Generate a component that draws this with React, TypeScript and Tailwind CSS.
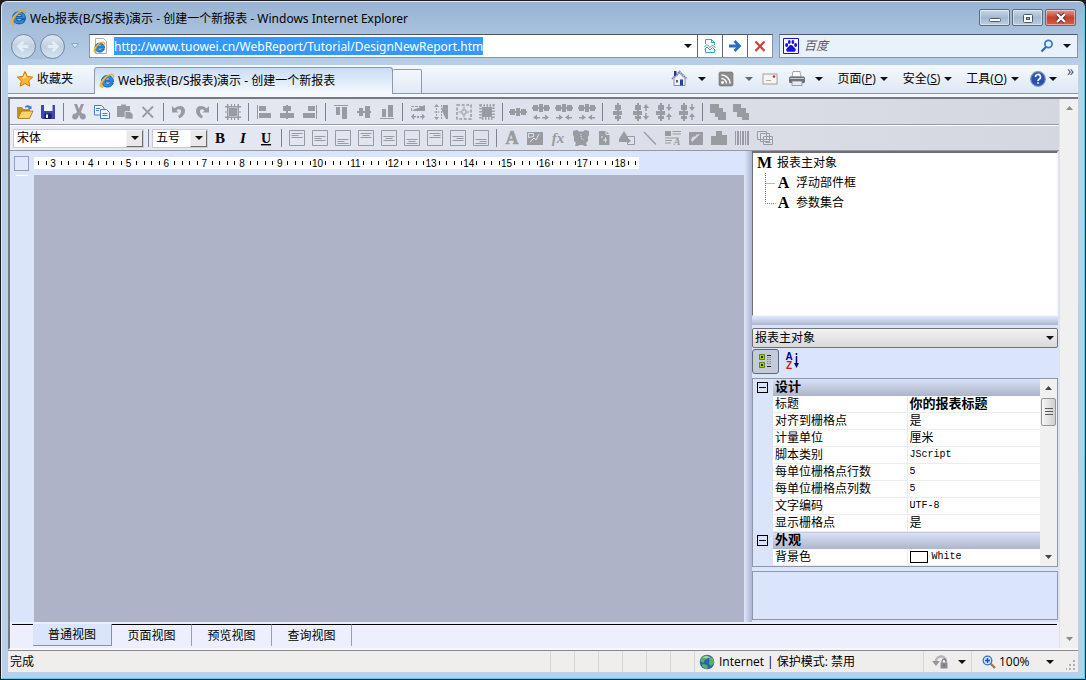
import { useState } from "react";

type Align = "start" | "center" | "end";

interface Tool {
  label: string;
  glyph: React.ReactNode;
}

const SEGOE = "font-['Open_Sans','Noto_Sans_CJK_SC',sans-serif]";
const SEGOE_WIDE = "font-['Noto_Sans','Noto_Sans_CJK_SC',sans-serif]";
const SONG = "font-['Liberation_Sans','Noto_Sans_CJK_SC',sans-serif]";
const SERIF_BOLD = "font-['Liberation_Serif',serif] font-bold";

export default function App() {
  return (
    <div className={`flex min-h-screen bg-[#1b1d20] p-px text-xs text-black ${SEGOE}`}>
      <div className="flex min-w-0 flex-1 flex-col rounded-t-md border border-[#dfeaf5] border-r-[#45d6ec] border-b-[#45d6ec] bg-linear-to-b from-[#98b4d3] via-[#bad1ea] via-10% to-[#b7d1ea] px-1.5 pb-1.5">
        <TitleBar />
        <NavigationBar />
        <CommandBar />
        <div className="h-[3px] bg-[#f4f7fb]" />
        <ReportDesigner />
        <StatusBar />
      </div>
    </div>
  );
}

const WINDOW_BUTTON =
  "grid h-[17px] w-[31px] place-items-center rounded-[2px] border border-[#5b6b80] shadow-[inset_0_0_0_1px_rgba(255,255,255,0.45)]";

function TitleBar() {
  return (
    <header className="flex h-[31px] items-center">
      <IeLogo className="ml-0.5 size-[17px]" />
      <h1 className={`ml-[3px] flex-1 pt-0.5 text-xs whitespace-nowrap ${SEGOE_WIDE}`}>
        Web报表(B/S报表)演示 - 创建一个新报表 - Windows Internet Explorer
      </h1>
      <div className="mr-0.5 flex gap-0.5">
        <button type="button" aria-label="最小化" className={`${WINDOW_BUTTON} bg-linear-to-b from-[#c9d8e9] via-[#a4b9d1] via-50% to-[#b9cde3]`}>
          <svg viewBox="0 0 30 16" className="h-4 w-[30px]">
            <rect x="9.5" y="8.5" width="11" height="3" rx="1" fill="#fff" stroke="#4d5663" />
          </svg>
        </button>
        <button type="button" aria-label="最大化" className={`${WINDOW_BUTTON} bg-linear-to-b from-[#c9d8e9] via-[#a4b9d1] via-50% to-[#b9cde3]`}>
          <svg viewBox="0 0 30 16" className="h-4 w-[30px]">
            <rect x="10.5" y="4.5" width="9" height="8" rx="1" fill="#fff" stroke="#4d5663" />
            <rect x="13.5" y="7.5" width="3" height="2" fill="#9db3cd" stroke="#4d5663" />
          </svg>
        </button>
        <button type="button" aria-label="关闭" className={`${WINDOW_BUTTON} bg-linear-to-b from-[#e09a8c] via-[#c2402c] via-50% to-[#d0604a]`}>
          <svg viewBox="0 0 30 16" className="h-4 w-[30px]">
            <path d="m11 4 8 8m0-8-8 8" stroke="#53302f" strokeWidth="4" />
            <path d="m11 4 8 8m0-8-8 8" stroke="#fff" strokeWidth="2.4" />
          </svg>
        </button>
      </div>
    </header>
  );
}

const ADDRESS_BUTTON = "grid h-full w-[25px] place-items-center border-l border-[#5c6a7a]";

function NavigationBar() {
  return (
    <div className="mb-1.5 flex h-[26px] items-center pl-[3px]">
      <div className="flex gap-1 rounded-full bg-[#a9c1db]">
        <RoundNavButton label="后退" path="M12 7 7 12l5 5M7 12h10" />
        <RoundNavButton label="前进" path="m12 7 5 5-5 5M17 12H7" />
      </div>
      <button type="button" aria-label="最近的页面" className="ml-1.5">
        <svg viewBox="0 0 8 6" className="h-1.5 w-2">
          <path d="M.5.5h7L4 5z" fill="#dbe7f3" stroke="#8fa5bd" />
        </svg>
      </button>

      <form className="ml-[10px] flex h-6 min-w-0 flex-1 items-center border border-[#8596aa] border-t-[#4e5864] bg-white">
        <svg viewBox="0 0 16 18" className="ml-[3px] h-[18px] w-4 shrink-0">
          <path d="M2.5 1.5h8l3 3v12h-11z" fill="#fff" stroke="#a9aeb5" />
          <g transform="translate(0 4) scale(.4)">
            <IeLogoShape />
          </g>
        </svg>
        <input
          type="text"
          aria-label="地址"
          defaultValue="http://www.tuowei.cn/WebReport/Tutorial/DesignNewReport.htm"
          className={`ml-[5px] h-[18px] field-sizing-content bg-[#3399ff] text-xs text-white outline-none ${SEGOE_WIDE}`}
        />
        <span className="flex-1" />
        <button type="button" aria-label="显示地址列表" className="grid h-full w-[18px] place-items-center">
          <Caret />
        </button>
        <button type="button" aria-label="兼容性视图" className={ADDRESS_BUTTON}>
          <svg viewBox="0 0 16 16" className="size-4 fill-none">
            <path d="M3.5 6V1.500h6l3 3V7M9.500 1.500v3h3M3.500 11v3.500h9V12" stroke="#35a7b8" />
            <path d="m2.500 9 2.500-2.500 3 3 2.500-2.500 3 3M2.500 11.500 5 9l3 3 2.500-2.500 3 3" stroke="#3f8fc4" />
          </svg>
        </button>
        <button type="button" aria-label="转到" className={ADDRESS_BUTTON}>
          <svg viewBox="0 0 16 16" className="size-4 fill-none">
            <path d="M2 8h9M7.500 3 12.500 8l-5 5" stroke="#2a6fbe" strokeWidth="2.800" />
          </svg>
        </button>
        <button type="button" aria-label="停止" className={ADDRESS_BUTTON}>
          <svg viewBox="0 0 16 16" className="size-4">
            <path d="M3.500 3.500 12.500 13M12.500 3.500l-9 9.500" stroke="#cf4140" strokeWidth="2.200" />
          </svg>
        </button>
      </form>

      <form role="search" className="ml-1.5 flex h-6 w-[299px] items-center border border-[#8596aa] border-t-[#4e5864] bg-[#e9f1fa]">
        <svg viewBox="0 0 16 16" className="ml-[3px] size-4">
          <path d="M.5.5h15v15H.5z" fill="#fff" stroke="#1414e0" />
          <g fill="#1414e0">
            <ellipse cx="3.600" cy="7" rx="1.500" ry="2" />
            <ellipse cx="6.300" cy="4" rx="1.400" ry="2" />
            <ellipse cx="9.900" cy="4" rx="1.400" ry="2" />
            <ellipse cx="12.600" cy="7" rx="1.500" ry="2" />
            <path d="M8 7c2 0 2.500 2 4 3.200 1.500 1.500.6 3.800-1.500 3.600-1.500-.2-3.500-.2-5 0-2.200.2-3-2.100-1.500-3.600C5.500 9 6 7 8 7z" />
          </g>
        </svg>
        <input
          type="search"
          aria-label="搜索"
          placeholder="百度"
          className="ml-[5px] min-w-0 flex-1 bg-transparent text-xs italic outline-none placeholder:text-[#5b5b5b]"
        />
        <button type="submit" aria-label="开始搜索" className="grid w-6 place-items-center">
          <svg viewBox="0 0 14 14" className="size-3.5 fill-none">
            <circle cx="8.500" cy="5" r="3.600" stroke="#3a7cc4" strokeWidth="1.800" />
            <path d="M6 8 1.500 12.500" stroke="#2b66a9" strokeWidth="2.200" />
          </svg>
        </button>
        <button type="button" aria-label="搜索选项" className="mr-0.5 grid w-4 place-items-center">
          <Caret />
        </button>
      </form>
    </div>
  );
}

function RoundNavButton({ label, path }: { label: string; path: string }) {
  return (
    <button
      type="button"
      aria-label={label}
      className="size-[25px] rounded-full border border-[#7288a1] bg-linear-to-b from-[#dfe8f1] via-[#c0d0e0] via-50% to-[#d5e4f1]"
    >
      <svg viewBox="0 0 24 24" className="size-[23px] fill-none">
        <path d={path} stroke="#e4edf5" strokeWidth="3" />
      </svg>
    </button>
  );
}

function CommandBar() {
  return (
    <div className="flex h-[29px] border-b border-[#8a94a1] bg-linear-to-b from-[#f5f9fd] to-[#dde8f5]">
      <button type="button" className="flex w-[86px] items-center gap-[3px] pl-2">
        <svg viewBox="0 0 18 18" className="size-[18px]">
          <path
            d="m9 1.500 2.300 5 5.400.6-4 3.700 1.100 5.400L9 13.500l-4.800 2.700 1.100-5.400-4-3.700 5.400-.6z"
            fill="#ffb52e"
            stroke="#c9780f"
          />
          <path d="m9 4 1.400 3.500L6 9z" fill="#ffe9a8" />
        </svg>
        收藏夹
      </button>
      <div role="tablist" className="-mb-px flex flex-1 items-end">
        <button
          type="button"
          role="tab"
          aria-selected="true"
          className={`flex h-[27px] w-[299px] items-center gap-[3px] rounded-t-[3px] border border-b-0 border-[#8d9aab] bg-linear-to-b from-[#c9dcf6] to-[#f6fafe] pl-1 ${SEGOE_WIDE}`}
        >
          <IeLogo className="size-4" />
          Web报表(B/S报表)演示 - 创建一个新报表
        </button>
        <button
          type="button"
          aria-label="新选项卡"
          className="h-[25px] w-[29px] rounded-t-[2px] border border-l-0 border-[#8d9aab] bg-linear-to-b from-[#f3f7fc] to-[#e0eaf6]"
        />
      </div>
      <div className="flex items-center">
        <CommandIcon label="主页" className="w-5">
          <path d="M3 8.500v7h11v-7L8.500 3z" fill="#f1f1f4" stroke="#73767f" strokeWidth=".8" />
          <path d="M1 9 8.500 1.500 16 9" fill="none" stroke="#6d7ec0" strokeWidth="1.600" strokeDasharray="1.500 .6" />
          <path d="M3 1h2.500v4L3 6.500z" fill="#2338a8" />
          <path d="M9 9.500h3v6H9z" fill="#24429d" />
          <path d="M5 10h2v2.500H5z" fill="#5b6275" />
        </CommandIcon>
        <MenuCaret className="w-6" />
        <CommandIcon label="源" className="w-6">
          <rect x="2" y="2" width="14" height="14" rx="1.500" fill="#8c8c8c" stroke="#6f6f6f" strokeWidth=".6" />
          <circle cx="5.500" cy="12.500" r="1.400" fill="#fff" />
          <path d="M4.500 8.500a5 5 0 0 1 5 5M4.500 5a8.500 8.500 0 0 1 8.500 8.500" fill="none" stroke="#fff" strokeWidth="1.500" />
        </CommandIcon>
        <MenuCaret className="w-[22px] opacity-60" />
        <CommandIcon label="阅读邮件" className="w-5">
          <rect x="2" y="4" width="14" height="10" fill="#f7f5f4" stroke="#8d8b8b" strokeWidth=".8" />
          <path d="M5 10.500h5" stroke="#b9a9a9" />
          <circle cx="13" cy="6.500" r="1.300" fill="#c9302c" />
        </CommandIcon>
        <CommandIcon label="打印" className="ml-1.5 w-[22px]">
          <path d="M5 1.500h7l1 5.500H4z" fill="#fdfdfd" stroke="#7c8088" strokeWidth=".7" />
          <rect x="1" y="6.500" width="16" height="6.500" rx="1.500" fill="#6e737b" />
          <path d="M2 8.500h14" stroke="#c6cad0" />
          <path d="M4 11h10v4.500H4z" fill="#e8ebef" stroke="#777c85" strokeWidth=".7" />
        </CommandIcon>
        <MenuCaret className="w-[22px]" />
        <CommandMenu text="页面" accessKey="P" />
        <CommandMenu text="安全" accessKey="S" />
        <CommandMenu text="工具" accessKey="O" />
        <CommandIcon label="帮助" className="ml-0.5 w-[22px]">
          <circle cx="9" cy="9" r="7.300" fill="#2a50b5" stroke="#7c8fb8" strokeWidth="1.200" />
          <path d="M6.500 7a2.500 2.500 0 1 1 3.600 2.200c-.8.5-1.100.8-1.100 1.800M9 12.200v1.600" fill="none" stroke="#fff" strokeWidth="1.700" />
        </CommandIcon>
        <MenuCaret className="w-2" />
        <button type="button" aria-label="更多" className="mr-1 -mt-4 ml-1.5 pl-1 text-sm leading-3 text-[#3a4f7d]">
          »
        </button>
      </div>
    </div>
  );
}

interface CommandIconProps {
  label: string;
  className: string;
  children: React.ReactNode;
}

function CommandIcon({ label, className, children }: CommandIconProps) {
  return (
    <button type="button" aria-label={label} className={`grid place-items-center ${className}`}>
      <svg viewBox="0 0 18 18" className="size-[18px]">
        {children}
      </svg>
    </button>
  );
}

function MenuCaret({ className }: { className: string }) {
  return (
    <span className={`grid place-items-center ${className}`}>
      <Caret />
    </span>
  );
}

function CommandMenu({ text, accessKey }: { text: string; accessKey: string }) {
  return (
    <button type="button" className="flex w-[65px] items-center justify-center gap-1 whitespace-nowrap">
      <span>
        {text}(<u>{accessKey}</u>)
      </span>
      <Caret />
    </button>
  );
}

function Caret() {
  return (
    <svg viewBox="0 0 8 4" className="h-1 w-2" aria-hidden="true">
      <path d="M0 0h8L4 4z" fill="#111" />
    </svg>
  );
}

function ReportDesigner() {
  return (
    <div className={`flex flex-1 border-t-2 border-b-2 border-l-2 border-[#777a80] border-b-[#f6f7fa] bg-[#dae4fa] ${SONG}`}>
      <main className="flex min-w-0 flex-1 flex-col">
        <StandardToolbar />
        <FormatToolbar />
        <div className="flex flex-1">
          <DesignSurface />
          <div className="w-2 bg-linear-to-r from-[#dfe8fb] to-[#a9b4cf]" />
          <aside className="flex w-[307px] shrink-0 flex-col pr-px pb-0.5">
            <ObjectTree />
            <div className="mt-px h-2 bg-linear-to-b from-[#dde6fa] to-[#aab5d0]" />
            <PropertyPanel />
          </aside>
        </div>
        <ViewTabs />
      </main>
      <div className="flex w-[19px] flex-col items-center justify-between border-l border-[#e2e2e2] bg-[#f1f0f0] py-[7px]">
        <ScrollArrow up muted />
        <ScrollArrow muted />
      </div>
    </div>
  );
}

function ScrollArrow({ up = false, muted = false }: { up?: boolean; muted?: boolean }) {
  return (
    <svg viewBox="0 0 7 4" className="h-1 w-[7px]" aria-hidden="true">
      <path d={up ? "M0 4h7L3.500 0z" : "M0 0h7L3.500 4z"} fill={muted ? "#8b8b8b" : "#444"} />
    </svg>
  );
}

const TOOLBAR = "flex h-[26px] items-center border-b border-[#959aa6] bg-linear-to-r from-[#e8ecf7] to-[#d4d7e0] pl-[3px]";

function StandardToolbar() {
  return (
    <div role="toolbar" aria-label="标准" className={TOOLBAR}>
      <ToolGroups groups={STANDARD_GROUPS} />
    </div>
  );
}

function FormatToolbar() {
  return (
    <div role="toolbar" aria-label="格式" className={`${TOOLBAR} border-t border-t-white`}>
      <ComboBox label="字体" options={["宋体", "黑体"]} className="w-[131px]" />
      <Separator />
      <ComboBox label="字号" options={["五号", "四号"]} className="w-14" />
      <ToolGroups groups={FORMAT_GROUPS} />
    </div>
  );
}

function ComboBox({ label, options, className }: { label: string; options: string[]; className: string }) {
  return (
    <div className={`relative h-[19px] bg-white ${className}`}>
      <select aria-label={label} className="h-full w-full appearance-none border border-[#c9ccd4] px-[3px] text-xs leading-4 outline-none">
        {options.map((option) => (
          <option key={option}>{option}</option>
        ))}
      </select>
      <span className="pointer-events-none absolute top-px right-px grid h-[17px] w-[17px] place-items-center border border-[#f4f4f4] border-r-[#6f6f6f] border-b-[#6f6f6f] bg-[#e9e9e9]">
        <Caret />
      </span>
    </div>
  );
}

function Separator() {
  return (
    <span className="flex w-2 justify-center">
      <span className="h-[18px] w-px bg-[#7d828e]" />
    </span>
  );
}

function ToolGroups({ groups }: { groups: Tool[][] }) {
  return groups.map((tools, index) => (
    <div key={tools[0].label} className="flex items-center">
      {index > 0 ? <Separator /> : null}
      {tools.map((tool) => (
        <button key={tool.label} type="button" aria-label={tool.label} className="grid h-[22px] w-[23px] place-items-center">
          <svg viewBox="0 0 20 20" className="size-5" fill="#999ba0">
            {tool.glyph}
          </svg>
        </button>
      ))}
    </div>
  ));
}

const arrowsBelow: Record<string, React.ReactNode> = {
  out: <path d="M2 15.500l4-3V15h3v1.500H6V18zM18 15.500l-4-3V15h-3v1.500h3V18z" />,
  in: <path d="M9 15.500l-4-3V15H2v1.500h3V18zM11 15.500l4-3V15h3v1.500h-3V18z" />,
};

const arrowsBeside: Record<string, React.ReactNode> = {
  out: <path d="M15 2l-3 4h2.200v3h1.500V6H18zM15 18l-3-4h2.200v-3h1.500v3H18z" />,
  in: <path d="M15 9l-3-4h2.200V2h1.500v3H18zM15 11l-3 4h2.200v3h1.500v-3H18z" />,
};

function horizontalSpacing(arrows?: "out" | "in") {
  return (
    <g transform={arrows ? undefined : "translate(0 4)"}>
      <path d="M2 3h5v6H2zM8 2h4v8H8zM13 3h5v6h-5zM1 5h18v2H1z" />
      {arrows ? arrowsBelow[arrows] : null}
    </g>
  );
}

function verticalSpacing(arrows?: "out" | "in") {
  return (
    <g transform={arrows ? undefined : "translate(3 0)"}>
      <path d="M4 3h6v5H4zM2 9h9v4H2zM4 14h6v3H4zM6 1h2v18H6z" />
      {arrows ? arrowsBeside[arrows] : null}
    </g>
  );
}

const STANDARD_GROUPS: Tool[][] = [
  [
    {
      label: "打开",
      glyph: (
        <>
          <path d="M2 5h5l1.500 2H15v3H6l-3 6H2z" fill="#c98e1b" />
          <path d="M3 16.500 6.500 9H18l-3.500 7.500z" fill="#ffd36b" stroke="#9a6b14" strokeWidth=".8" />
          <path d="M10 4.500c2-2 4-1.500 5.500 0l1-1V7h-3.500l1-1c-1-1-2.500-1.200-4-.2z" fill="#4a73c9" />
        </>
      ),
    },
    {
      label: "保存",
      glyph: (
        <>
          <path d="M3 3h14v14H4.500L3 15.500z" fill="#3f46b8" />
          <path d="M6 3h8.500v6H6z" fill="#eef1fb" />
          <path d="M6.500 11.500h7V17h-7z" fill="#1c2059" />
          <path d="M8 12.500h2V16H8z" fill="#fff" />
        </>
      ),
    },
  ],
  [
    {
      label: "剪切",
      glyph: <path d="M5 2h3l2 5 2-5h3l-3 8 1.500 1.500a3 3 0 1 1-2.500 4L10 12.500 9 15.500a3 3 0 1 1-2.500-4L8 10z" />,
    },
    {
      label: "复制",
      glyph: (
        <g fill="#e9f3ff" stroke="#4a7cc4">
          <path d="M2.500 3.500h7l2.500 2.500v7H2.500z" />
          <path d="M8.500 7.500h6l3 3v6h-9z" />
          <path d="M4 6.500h4M4 8.500h3M10.500 11.500h5M10.500 13.500h5" />
        </g>
      ),
    },
    {
      label: "粘贴",
      glyph: (
        <>
          <path d="M2 4h4V2.500h5V4h4v5h-4v6H2z" />
          <path d="M10 9.500h5l3 2.500v5h-8z" stroke="#e0e3ec" strokeWidth=".8" />
        </>
      ),
    },
    { label: "删除", glyph: <path d="m4.500 5 10.500 10.500M15 4.500 4.500 15" stroke="#999ba0" strokeWidth="1.800" /> },
  ],
  [
    { label: "撤消", glyph: <path d="M3 4v6.500h6.500L7.500 8.500c2-2 4.500-1.500 4.500 1 0 2-1 3-3 4.500l1.500 2.500c3.500-2 5.500-4.200 5.500-7.500 0-5.500-6-6.500-10.500-2.500z" /> },
    { label: "恢复", glyph: <path d="M17 4v6.500h-6.500l2-2c-2-2-4.500-1.500-4.500 1 0 2 1 3 3 4.500L9.500 16.500C6 14.500 4 12.300 4 9c0-5.500 6-6.500 10.500-2.500z" /> },
  ],
  [
    {
      label: "对齐到栅格",
      glyph: (
        <path d="M6 6h8v8H6zM2 4h16v1.500H2zM2 14.500h16V16H2zM4 2h1.500v16H4zM14.500 2H16v16h-1.500zM8 2h1v3H8zM11 2h1v3h-1zM8 15h1v3H8zM11 15h1v3h-1zM2 9.500h3v1H2zM15 9.500h3v1h-3z" />
      ),
    },
  ],
  [
    { label: "左对齐", glyph: <path d="M3 3h1v14H3zM5 4h7v5H5zM5 11h12v5H5z" /> },
    { label: "居中对齐", glyph: <path d="M9 3h2v14H9zM6 4h8v5H6zM3 11h14v5H3z" /> },
    { label: "右对齐", glyph: <path d="M16 3h1v14h-1zM8 4h7v5H8zM3 11h12v5H3z" /> },
  ],
  [
    { label: "顶端对齐", glyph: <path d="M3 3h14v1H3zM5 5h4v8H5zM11 5h5v12h-5z" /> },
    { label: "中间对齐", glyph: <path d="M3 9h14v2H3zM5 6h4v8H5zM11 4h5v12h-5z" /> },
    { label: "底端对齐", glyph: <path d="M3 16h14v1H3zM5 7h4v8H5zM11 3h5v12h-5z" /> },
  ],
  [
    {
      label: "宽度相同",
      glyph: (
        <>
          <path d="M3.500 9V4.500h13" fill="none" stroke="#999ba0" strokeDasharray="3 1" />
          <path d="M10 6l7-3v6H4l3-2zM3 14.500l3-3V14h2v1.500H6V18zM17 14.500l-3-3V14h-2v1.500h2V18z" />
          <path d="M9 14h2v2H9z" />
        </>
      ),
    },
    {
      label: "高度相同",
      glyph: (
        <>
          <path d="M12 3h5v14h-2l-4-8z" />
          <path d="M10.500 3v14M3.500 10h5M5.500 3v14" fill="none" stroke="#999ba0" strokeDasharray="2 1" />
          <path d="M5.500 2l2.500 3H3zM5.500 18l2.500-3H3z" />
        </>
      ),
    },
    {
      label: "大小相同",
      glyph: (
        <>
          <path d="M3 3h14v14H3z" fill="none" stroke="#999ba0" strokeWidth="1.500" strokeDasharray="3 1.600" />
          <path d="M8 8h4v4H8z" fill="none" stroke="#999ba0" />
          <path d="M9.500 4.500h1v3h-1zM9.500 12.500h1v3h-1zM4.500 9.500h3v1h-3zM12.500 9.500h3v1h-3z" />
        </>
      ),
    },
    {
      label: "大小适应栅格",
      glyph: (
        <>
          <path d="M5 5h10v10H5z" />
          <path d="M3.500 3.500h13v13h-13z" fill="none" stroke="#999ba0" strokeWidth="2.500" strokeDasharray="1.500 1.500" />
        </>
      ),
    },
  ],
  [
    { label: "水平间距相等", glyph: horizontalSpacing() },
    { label: "增加水平间距", glyph: horizontalSpacing("out") },
    { label: "减少水平间距", glyph: horizontalSpacing("in") },
    { label: "删除水平间距", glyph: horizontalSpacing("in") },
  ],
  [
    { label: "垂直间距相等", glyph: verticalSpacing() },
    { label: "增加垂直间距", glyph: verticalSpacing("out") },
    { label: "减少垂直间距", glyph: verticalSpacing("in") },
    { label: "删除垂直间距", glyph: verticalSpacing("in") },
  ],
  [
    { label: "置于顶层", glyph: <path d="M2 2h9v4h4v4h3v8h-8v-3H7v-4H2z" /> },
    { label: "置于底层", glyph: <path d="M2 2h8v4h5v5h3v7h-7v-3H6v-5H2z" /> },
  ],
];

const LINE_TOP: Record<Align, number> = { start: 5, center: 8, end: 11 };

function alignTool(label: string, horizontal: Align, vertical: Align): Tool {
  const top = LINE_TOP[vertical];
  const inset = horizontal === "start" ? 4 : horizontal === "center" ? 6 : 8;

  return {
    label,
    glyph: (
      <path
        d={`M2.500 2.500h15v15h-15zM4.500 ${top}.500h11M${inset}.500 ${top + 2}.500h7M4.500 ${top + 4}.500h11`}
        fill="none"
        stroke="#999ba0"
      />
    ),
  };
}

const FORMAT_GROUPS: Tool[][] = [
  [
    { label: "加粗", glyph: <text x="10" y="15" textAnchor="middle" fontSize="15" fill="#000" className={SERIF_BOLD}>B</text> },
    { label: "斜体", glyph: <text x="10" y="15" textAnchor="middle" fontSize="15" fill="#000" className={`${SERIF_BOLD} italic`}>I</text> },
    { label: "下划线", glyph: <text x="10" y="15" textAnchor="middle" fontSize="14" fill="#000" className={`${SERIF_BOLD} underline`}>U</text> },
  ],
  [
    alignTool("左上对齐", "start", "start"),
    alignTool("左中对齐", "start", "center"),
    alignTool("左下对齐", "start", "end"),
    alignTool("中上对齐", "center", "start"),
    alignTool("正中对齐", "center", "center"),
    alignTool("中下对齐", "center", "end"),
    alignTool("右上对齐", "end", "start"),
    alignTool("右中对齐", "end", "center"),
    alignTool("右下对齐", "end", "end"),
  ],
  [
    { label: "文本", glyph: <text x="10" y="16" textAnchor="middle" fontSize="18" stroke="#999ba0" strokeWidth=".6" className={SERIF_BOLD}>A</text> },
    {
      label: "图片",
      glyph: (
        <>
          <path d="M2 4h16v13H2z" />
          <path d="M3.500 5.500h5v3l-5 1zM5 14l4-4 2 2 3-6" fill="none" stroke="#e0e3ec" />
        </>
      ),
    },
    { label: "公式", glyph: <text x="10" y="15" textAnchor="middle" fontSize="15" className={`${SERIF_BOLD} italic`}>fx</text> },
    {
      label: "时间",
      glyph: (
        <>
          <path d="M2 3l4-1 2 1.500h4L14 2l4 1v4l-1 2v4l-2 2 1 3h-3l-1-1H8l-1 1H4l1-3-2-2V9L2 7z" />
          <path d="M10 6v4l3 2" fill="none" stroke="#e0e3ec" strokeDasharray="1 1" />
        </>
      ),
    },
    {
      label: "页码",
      glyph: (
        <>
          <path d="M5 3h7l3.500 3.500V17H5z" />
          <path d="M12 3v3.500h3.500M7 9h2M11.500 9.500v5M9 12h4" fill="none" stroke="#e0e3ec" />
        </>
      ),
    },
    {
      label: "形状",
      glyph: (
        <>
          <path d="M7 3l5 8v3H2v-3z" />
          <path d="M10.500 8.500h7v8h-7z" fill="#dfe2eb" stroke="#999ba0" />
          <path d="M10 9l4 4-4 3z" />
        </>
      ),
    },
    { label: "直线", glyph: <path d="m4 4 12 12.500" stroke="#999ba0" strokeWidth="1.300" /> },
    {
      label: "富文本",
      glyph: (
        <>
          <path d="M2 3h6v5H2zM9.500 3H18v1H9.500zM9.500 5.500H18v1H9.500zM2 9.500h14v1H2zM2 12h7v1H2zM2 14.500h6v1H2z" />
          <text x="14" y="17" textAnchor="middle" fontSize="10" className={`${SERIF_BOLD} italic`}>A</text>
        </>
      ),
    },
    {
      label: "图像",
      glyph: (
        <>
          <path d="M3 4h14v13H3z" />
          <path d="M5 12c1-5 4-2 5.500-5.500L15 6l-8 9z" fill="#d5d8e1" />
          <path d="M7 15l8-8" stroke="#999ba0" strokeWidth="2.500" />
        </>
      ),
    },
    { label: "图表", glyph: <path d="M2 8h5V3h6v4h5v10H2z" /> },
    { label: "条形码", glyph: <path d="M3 3h1v14H3zM5 3h2v14H5zM8 3h1v14H8zM10 3h2v14h-2zM13 3h1v14h-1zM15 3h2v14h-2z" /> },
    {
      label: "子报表",
      glyph: (
        <g fill="#dfe2eb" stroke="#999ba0">
          <path d="M2.500 3.500h9v8h-9zM5.500 5.500h9v8h-9zM8.500 8.500h9v8h-9z" />
          <path d="M8.500 11.500h9M10.500 14.500h5" />
        </g>
      ),
    },
  ],
];

function DesignSurface() {
  return (
    <section className="flex min-w-0 flex-1 flex-col">
      <div className="flex h-6 items-center">
        <span className="ml-1 size-[15px] border border-[#93a0bd] bg-[#dfe8fb]" />
        <div className="ml-[5px] bg-white">
          <Ruler />
        </div>
      </div>
      <div className="flex flex-1">
        <div className="w-6 px-1.5">
          <div className="h-px bg-white" />
        </div>
        <div className="flex-1 bg-[#aeb3c7]" />
      </div>
    </section>
  );
}

// One centimetre on the ruler, divided into five ticks.
const CENTIMETRE = 37.8;

function Ruler() {
  const marks = Array.from({ length: 16 }, (_, index) => index + 3);

  return (
    <svg width="605" height="12" viewBox="0 0 605 12" className="block" aria-label="标尺">
      <path d="M4.500 4v4M12.500 4v4" stroke="#000" />
      {marks.map((mark, index) => {
        const x = 19 + index * CENTIMETRE;
        return (
          <g key={mark}>
            <text x={x} y="10" textAnchor="middle" fontSize="10">
              {mark}
            </text>
            {[1, 2, 3, 4].map((tick) => {
              const tickX = Math.round(x + (tick * CENTIMETRE) / 5);
              return tickX < 603 ? <path key={tick} d={`M${tickX}.5 4v4`} stroke="#000" /> : null;
            })}
          </g>
        );
      })}
    </svg>
  );
}

function ObjectTree() {
  return (
    <div className="flex-1 border border-t-2 border-[#f4f6fb] border-t-[#6e7075] border-l-[#6e7075] bg-white">
      <div className="pl-1">
        <TreeLabel letter="M" text="报表主对象" />
      </div>
      <ul className="pl-3">
        <li className="flex">
          <TreeBranch path="M.5 0v20M.5 10.500h10" />
          <TreeLabel letter="A" text="浮动部件框" />
        </li>
        <li className="flex">
          <TreeBranch path="M.5 0v10.500h10" />
          <TreeLabel letter="A" text="参数集合" />
        </li>
      </ul>
    </div>
  );
}

function TreeLabel({ letter, text }: { letter: string; text: string }) {
  return (
    <button type="button" className="flex h-5 items-center gap-[5px] text-xs">
      <span className={`w-[15px] text-center text-base leading-5 ${SERIF_BOLD}`}>{letter}</span>
      {text}
    </button>
  );
}

function TreeBranch({ path }: { path: string }) {
  return (
    <svg viewBox="0 0 11 20" className="h-5 w-[11px] fill-none" aria-hidden="true">
      <path d={path} stroke="#777" strokeDasharray="1 1" />
    </svg>
  );
}

interface Property {
  name: string;
  value: string;
  style?: "bold" | "mono" | "color";
}

const SECTIONS: { title: string; properties: Property[] }[] = [
  {
    title: "设计",
    properties: [
      { name: "标题", value: "你的报表标题", style: "bold" },
      { name: "对齐到栅格点", value: "是" },
      { name: "计量单位", value: "厘米" },
      { name: "脚本类别", value: "JScript", style: "mono" },
      { name: "每单位栅格点行数", value: "5", style: "mono" },
      { name: "每单位栅格点列数", value: "5", style: "mono" },
      { name: "文字编码", value: "UTF-8", style: "mono" },
      { name: "显示栅格点", value: "是" },
    ],
  },
  {
    title: "外观",
    properties: [{ name: "背景色", value: "White", style: "color" }],
  },
];

function PropertyPanel() {
  return (
    <>
      <div className="relative mt-[3px] h-5">
        <select
          aria-label="对象"
          className="h-full w-full appearance-none rounded-[2px] border border-[#707276] bg-linear-to-b from-[#f3f3f3] to-[#d9d9d9] pl-0.5 text-xs outline-none"
        >
          <option>报表主对象</option>
        </select>
        <span className="pointer-events-none absolute top-2 right-1">
          <Caret />
        </span>
      </div>
      <div className="mb-[3px] flex h-[27px] items-center gap-1">
        <button type="button" aria-label="按分类" className="grid h-[25px] w-[27px] place-items-center rounded-[3px] border border-[#5f6878] bg-[#c3cad9]">
          <svg viewBox="0 0 16 16" className="size-4">
            <path d="M1.500 1.500h5v5h-5zM1.500 9.500h5v5h-5z" fill="#a5cc1e" stroke="#67810f" />
            <path d="M3 4h2M4 3v2M3 12h2M4 11v2" stroke="#000" />
            <path d="M9 2.500h4M9 13.500h4" stroke="#222" />
            <path d="M9 4.500h5M9 6.500h5M9 8.500h5M9 10.500h5" stroke="#888" strokeDasharray="1.500 1" />
          </svg>
        </button>
        <button type="button" aria-label="按字母" className="grid h-[25px] w-5 place-items-center">
          <svg viewBox="0 0 16 18" className="h-[18px] w-4">
            <text x="4" y="8" textAnchor="middle" fontSize="10" fontWeight="bold" fill="#000090">A</text>
            <text x="4" y="17" textAnchor="middle" fontSize="10" fontWeight="bold" fill="#c81e1e">Z</text>
            <path d="M11.500 1v2M11.500 4v8" stroke="#000090" strokeWidth="1.500" />
            <path d="M9 11h5l-2.500 5z" fill="#000090" />
          </svg>
        </button>
      </div>
      <div className="flex border border-[#8f97a8] bg-white">
        <table className="flex-1 table-fixed border-collapse text-xs leading-4">
          <colgroup>
            <col className="w-5" />
            <col className="w-[134px]" />
            <col />
          </colgroup>
          {SECTIONS.map((section) => (
            <PropertySection key={section.title} {...section} />
          ))}
        </table>
        <div className="flex w-[17px] flex-col items-center bg-[#f0f0f0] py-[7px]">
          <ScrollArrow up />
          <div className="mt-2 flex h-7 w-[15px] flex-col items-center justify-center gap-0.5 rounded-[2px] border border-[#979797] bg-linear-to-r from-[#f6f6f6] to-[#cfcfcf]">
            <span className="h-px w-2 bg-[#5a5a5a]" />
            <span className="h-px w-2 bg-[#5a5a5a]" />
            <span className="h-px w-2 bg-[#5a5a5a]" />
          </div>
          <span className="flex-1" />
          <ScrollArrow />
        </div>
      </div>
      <div className="mt-1 h-[49px] border border-[#8f97a8]" />
    </>
  );
}

function PropertySection({ title, properties }: { title: string; properties: Property[] }) {
  const [open, setOpen] = useState(true);

  return (
    <tbody>
      <tr className="h-[17px]">
        <td className="bg-[#dae4fa] p-0">
          <button
            type="button"
            aria-label={title}
            aria-expanded={open}
            onClick={() => setOpen(!open)}
            className="ml-1 grid size-[11px] place-items-center border border-black"
          >
            <span className="h-px w-[7px] bg-black" />
          </button>
        </td>
        <th colSpan={2} className="bg-linear-to-b from-[#d9e2f6] to-[#abb4c9] p-0 pl-0.5 text-left text-[13px] leading-4">
          {title}
        </th>
      </tr>
      {open
        ? properties.map((property) => (
            <tr key={property.name} className="h-[17px]">
              <td className="bg-[#dae4fa] p-0" />
              <td className="border-r border-b border-[#ececf0] p-0 pl-0.5 whitespace-nowrap">{property.name}</td>
              <td className="border-b border-[#ececf0] p-0 pl-0.5 whitespace-nowrap">
                <PropertyValue {...property} />
              </td>
            </tr>
          ))
        : null}
    </tbody>
  );
}

function PropertyValue({ value, style }: Property) {
  if (style === "bold") {
    return <strong className="block text-[13px] leading-4">{value}</strong>;
  }

  if (style === "mono" || style === "color") {
    return (
      <span className="flex items-center gap-1 font-['Liberation_Mono',monospace] text-[10px] leading-4">
        {style === "color" ? <span className="h-3 w-[18px] border border-black bg-white" /> : null}
        {value}
      </span>
    );
  }

  return value;
}

const VIEWS = ["普通视图", "页面视图", "预览视图", "查询视图"];

function ViewTabs() {
  const [active, setActive] = useState(VIEWS[0]);

  return (
    <div role="tablist" className="flex h-[26px] bg-[#edf0fc] pt-0.5">
      <span className="ml-0.5 w-[21px] border-t border-black" />
      {VIEWS.map((view) => (
        <button
          key={view}
          type="button"
          role="tab"
          aria-selected={view === active}
          onClick={() => setActive(view)}
          className={
            view === active
              ? "h-[22px] w-[79px] border-r border-b border-[#8b90a0] bg-[#dae4fa] text-xs"
              : "h-[22px] w-20 border-t border-r border-t-black border-r-[#9a9fab] text-xs"
          }
        >
          {view}
        </button>
      ))}
      <span className="mr-0.5 flex-1 border-t border-black" />
    </div>
  );
}

function StatusBar() {
  return (
    <footer className="flex h-[22px] shrink-0 items-stretch border-t border-[#8c8c8c] bg-[#f0eded]">
      <div className="flex flex-1 items-center pl-0.5">完成</div>
      {[1, 2, 3, 4, 5, 6].map((pane) => (
        <div key={pane} className="w-6 border-l border-[#d8d5d5]" />
      ))}
      <div className="flex w-[229px] items-center gap-1 border-l border-[#d8d5d5] pl-1 whitespace-nowrap">
        <svg viewBox="0 0 16 16" className="size-4">
          <circle cx="8" cy="8" r="7.300" fill="#2c62b8" />
          <path d="M3 3.500C5 1.500 7 1 9 2L8 5 5.500 6 5 8.500 1.500 8c0-2 .5-3.300 1.500-4.500zM10 4l3.500-.500C15 5.500 15.300 7 15 9l-3 3-2-2 .5-2.500zM4 10l4 1 1 3-2 1c-2-.5-3.500-2-4-4z" fill="#58b948" />
          <path d="M4 3.500C6 1.500 10 1.500 12 3.500 10 4 6 5 4 3.500z" fill="#cfe7f7" opacity=".6" />
        </svg>
        Internet | 保护模式: 禁用
      </div>
      <button type="button" aria-label="隐私" className="flex w-12 items-center gap-2 border-l border-[#d8d5d5] pl-2">
        <svg viewBox="0 0 18 16" className="h-4 w-[18px]">
          <path d="M4 8a5 5 0 0 1 10-1" fill="none" stroke="#b5b5b8" strokeWidth="2.400" />
          <path d="M0 7h8l-4 5z" fill="#96979b" />
          <path d="M8.500 8.500h7v6h-7z" fill="#8a8b8f" />
          <path d="M10 8.500V7a2 2 0 0 1 4 0v1.500M12 10.500v2" fill="none" stroke="#5f6064" />
        </svg>
        <Caret />
      </button>
      <button type="button" className="flex w-[91px] items-center gap-[3px] border-l border-[#d8d5d5] pr-2 pl-2.5">
        <svg viewBox="0 0 14 14" className="size-3.5">
          <path d="m8 8 5 5" stroke="#a9783b" strokeWidth="2.400" />
          <circle cx="5.500" cy="5.500" r="4.300" fill="#cfe6fb" stroke="#2f74c4" strokeWidth="1.300" />
          <path d="M3 5.500h5M5.500 3v5" stroke="#1c57a8" strokeWidth="1.500" />
        </svg>
        <span className="flex-1 text-left">100%</span>
        <Caret />
      </button>
      <div className="flex w-4 items-end justify-end p-0.5">
        <svg viewBox="0 0 10 10" className="size-2.5" fill="#b3b0b0">
          <path d="M7 0h2v2H7zM7 4h2v2H7zM7 8h2v2H7zM3 4h2v2H3zM3 8h2v2H3zM-1 8h2v2h-2z" />
        </svg>
      </div>
    </footer>
  );
}

function IeLogo({ className }: { className: string }) {
  return (
    <svg viewBox="0 0 32 32" className={className} aria-hidden="true">
      <IeLogoShape />
    </svg>
  );
}

function IeLogoShape() {
  return (
    <>
      <path
        d="M17 5c7 0 12 5 12 13H12c.5 3 2.500 4.500 5.500 4.500 2 0 3.500-.8 4.500-2.500h6.500c-1.500 5-6 8-11.500 8C10 28 5 23.500 5 16.500S10 5 17 5zm-5 9h10.500c-.6-2.700-2.500-4-5-4s-4.800 1.300-5.500 4z"
        fill="#2b8fe0"
        stroke="#155fae"
        strokeWidth="2"
        fillRule="evenodd"
      />
      <path
        d="M28.500 10c2-5 1-8-3-8C18 2 6 11 3 20c-2.500 7 0 11 7 7.500-4 .5-5-2.500-3-7.500C10 13 18 5.500 24.500 4c3-.6 4.500 1.500 4 6z"
        fill="#f6bd2c"
        stroke="#d99a1a"
        strokeWidth="1"
      />
    </>
  );
}
